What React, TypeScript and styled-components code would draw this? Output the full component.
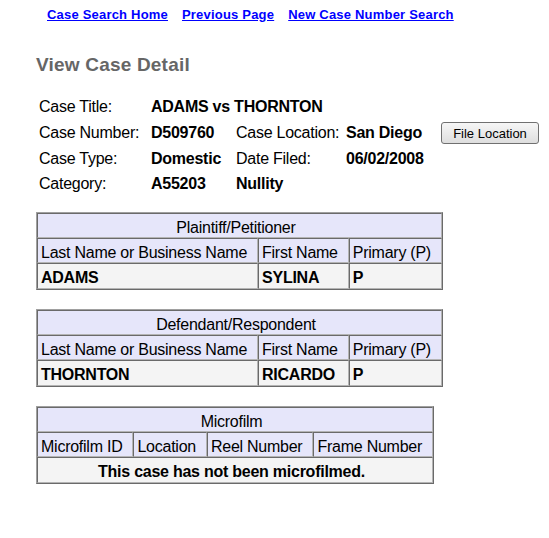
import React from 'react';
import styled, { createGlobalStyle } from 'styled-components';

const GlobalStyle = createGlobalStyle`
   body {
      margin: 0;
      background: #ffffff;
      font-family: "Liberation Sans", Arial, sans-serif;
      color: #000000;
   }
`;

const Page = styled.div`
   width: 549px;
   padding: 7px 0 0 36px;
   box-sizing: border-box;
`;

const Nav = styled.nav`
   display: flex;
   gap: 14px;
   margin-left: 11px;
   height: 16px;
`;

const NavLink = styled.a`
   font-size: 13px;
   font-weight: 700;
   line-height: 16px;
   letter-spacing: 0.2px;
   color: #0000ff;
   text-decoration: underline;
`;

const Heading = styled.h2`
   margin: 31px 0 0;
   font-size: 19px;
   line-height: 22px;
   letter-spacing: 0.2px;
   font-weight: 700;
   color: #666666;
`;

const Info = styled.div`
   display: grid;
   grid-template-columns: 112px 85px 110px 95px auto;
   grid-template-rows: 26px 26px 25px 25px;
   align-items: center;
   margin: 18px 0 0 3px;
   font-size: 16px;
   line-height: 18px;
   letter-spacing: -0.25px;
`;

const Label = styled.span`
   font-weight: 400;
`;

const Value = styled.span<{ $span?: number }>`
   font-weight: 700;
   grid-column: ${(p) => (p.$span ? `span ${p.$span}` : 'auto')};
`;

const Empty = styled.span``;

const Button = styled.button`
   width: 98px;
   height: 22px;
   padding: 0;
   font-family: "Liberation Sans", Arial, sans-serif;
   font-size: 13px;
   color: #000000;
   background: linear-gradient(#f6f6f6, #dedede);
   border: 1px solid #707070;
   border-radius: 3px;
`;

const Tables = styled.div`
   display: flex;
   flex-direction: column;
   align-items: flex-start;
   gap: 19px;
   margin-top: 16px;
`;

const Table = styled.table`
   border-collapse: separate;
   border-spacing: 0;
   border: 1px solid;
   border-color: #a0a0a0 #6a6a6a #6a6a6a #a0a0a0;
   font-size: 16px;
   line-height: 18px;
   letter-spacing: -0.25px;
`;

const Cell = styled.td<{ $bold?: boolean; $center?: boolean; $shade?: 'head' | 'data' }>`
   height: ${(p) => (p.$shade === 'data' ? '20px' : '19px')};
   padding: 4px 10px 0 3px;
   border: 1px solid;
   border-color: #6a6a6a #b4b4b4 #b4b4b4 #6a6a6a;
   background: ${(p) => (p.$shade === 'data' ? '#f4f4f4' : '#e6e6fa')};
   font-weight: ${(p) => (p.$bold ? 700 : 400)};
   text-align: ${(p) => (p.$center ? 'center' : 'left')};
   white-space: nowrap;
   vertical-align: middle;
`;

interface Party {
   last: string;
   first: string;
   primary: string;
}

const PartyTable: React.FC<{ title: string; party: Party }> = ({ title, party }) => (
   <Table>
      <tbody>
         <tr>
            <Cell colSpan={3} $center>
               {title}
            </Cell>
         </tr>
         <tr>
            <Cell>Last Name or Business Name</Cell>
            <Cell>First Name</Cell>
            <Cell>Primary (P)</Cell>
         </tr>
         <tr>
            <Cell $shade="data" $bold>
               {party.last}
            </Cell>
            <Cell $shade="data" $bold>
               {party.first}
            </Cell>
            <Cell $shade="data" $bold>
               {party.primary}
            </Cell>
         </tr>
      </tbody>
   </Table>
);

const App: React.FC = () => {
   return (
      <Page>
         <GlobalStyle />
         <Nav>
            <NavLink href="#">Case Search Home</NavLink>
            <NavLink href="#">Previous Page</NavLink>
            <NavLink href="#">New Case Number Search</NavLink>
         </Nav>
         <Heading>View Case Detail</Heading>
         <Info>
            <Label>Case Title:</Label>
            <Value $span={4}>ADAMS vs THORNTON</Value>

            <Label>Case Number:</Label>
            <Value>D509760</Value>
            <Label>Case Location:</Label>
            <Value>San Diego</Value>
            <Button type="button">File Location</Button>

            <Label>Case Type:</Label>
            <Value>Domestic</Value>
            <Label>Date Filed:</Label>
            <Value>06/02/2008</Value>
            <Empty />

            <Label>Category:</Label>
            <Value>A55203</Value>
            <Value>Nullity</Value>
            <Empty />
            <Empty />
         </Info>
         <Tables>
            <PartyTable
               title="Plaintiff/Petitioner"
               party={{ last: 'ADAMS', first: 'SYLINA', primary: 'P' }}
            />
            <PartyTable
               title="Defendant/Respondent"
               party={{ last: 'THORNTON', first: 'RICARDO', primary: 'P' }}
            />
            <Table>
               <tbody>
                  <tr>
                     <Cell colSpan={4} $center>
                        Microfilm
                     </Cell>
                  </tr>
                  <tr>
                     <Cell>Microfilm ID</Cell>
                     <Cell>Location</Cell>
                     <Cell>Reel Number</Cell>
                     <Cell>Frame Number</Cell>
                  </tr>
                  <tr>
                     <Cell colSpan={4} $shade="data" $bold $center>
                        This case has not been microfilmed.
                     </Cell>
                  </tr>
               </tbody>
            </Table>
         </Tables>
      </Page>
   );
};

export default App;
